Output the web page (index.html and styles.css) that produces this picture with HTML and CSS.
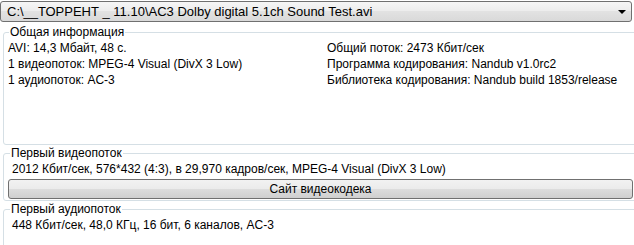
FILE: index.html
```html
<!DOCTYPE html>
<html lang="ru">
<head>
  <meta charset="UTF-8">
  <title>MediaInfo</title>
  <link rel="stylesheet" href="styles.css">
</head>
<body>
<div class="window">
  <div class="combo">
    <span class="combo-text">C:\__ТОРРЕНТ _ 11.10\AC3 Dolby digital 5.1ch Sound Test.avi</span>
    <span class="combo-arrow"></span>
  </div>

  <fieldset class="group group-general">
    <legend>Общая информация</legend>
    <div class="info-grid">
      <div>AVI: 14,3 Мбайт, 48 с.</div>
      <div>Общий поток: 2473 Кбит/сек</div>
      <div>1 видеопоток: MPEG-4 Visual (DivX 3 Low)</div>
      <div>Программа кодирования: Nandub v1.0rc2</div>
      <div>1 аудиопоток: AC-3</div>
      <div>Библиотека кодирования: Nandub build 1853/release</div>
    </div>
  </fieldset>

  <fieldset class="group group-stream">
    <legend>Первый видеопоток</legend>
    <div class="line">2012 Кбит/сек, 576*432 (4:3), в 29,970 кадров/сек, MPEG-4 Visual (DivX 3 Low)</div>
    <button class="codec-button" type="button">Сайт видеокодека</button>
  </fieldset>

  <fieldset class="group group-stream group-last">
    <legend>Первый аудиопоток</legend>
    <div class="line">448 Кбит/сек, 48,0 КГц, 16 бит, 6 каналов, AC-3</div>
  </fieldset>
</div>
</body>
</html>
```

FILE: styles.css
```css
html, body {
  margin: 0;
  padding: 0;
  background: #fff;
  overflow: hidden;
}

body {
  font-family: "Liberation Sans", Arial, sans-serif;
  font-size: 12px;
  line-height: 16px;
  color: #000;
}

.window {
  width: 634px;
  height: 245px;
  overflow: hidden;
  display: flex;
  flex-direction: column;
}

.combo {
  flex-shrink: 0;
  margin: 1px 2px 0 0;
  height: 19px;
  border: 1px solid #707070;
  border-radius: 3px;
  background: linear-gradient(to bottom, #f6f6f6 0%, #ececec 50%, #e2e2e2 50%, #d9d9d9 100%);
  display: flex;
  align-items: center;
  justify-content: space-between;
  padding: 0 5px 0 6px;
  font-size: 13px;
}

.combo-arrow {
  width: 0;
  height: 0;
  border-left: 4px solid transparent;
  border-right: 4px solid transparent;
  border-top: 4px solid #000;
  margin-top: 1px;
}

.group {
  flex-shrink: 0;
  margin: 0 -3px 0 3px;
  border: 1px solid #d5dfe5;
  border-radius: 3px;
  min-width: 0;
}

.group legend {
  padding: 0 1px;
  line-height: 16px;
}

.group-general {
  margin-top: 2px;
  height: 119px;
  padding: 0 0 0 4px;
}

.group-general legend {
  margin-left: 1px;
}

.info-grid {
  display: grid;
  grid-template-columns: 319px 1fr;
}

.group-stream {
  margin-top: 0;
  padding: 0 0 0 8px;
}

.group-stream legend {
  margin-left: -2px;
}

.codec-button {
  display: block;
  margin: 2px 3px 1px -4px;
  width: calc(100% + 1px);
  height: 20px;
  border: 1px solid #707070;
  border-radius: 3px;
  background: linear-gradient(to bottom, #f2f2f2 0%, #ebebeb 50%, #dddddd 50%, #cfcfcf 100%);
  font-family: "Liberation Sans", Arial, sans-serif;
  font-size: 12px;
  color: #000;
  padding: 0;
}

.group-last {
  flex: 1 0 auto;
  margin-bottom: -10px;
}
```
